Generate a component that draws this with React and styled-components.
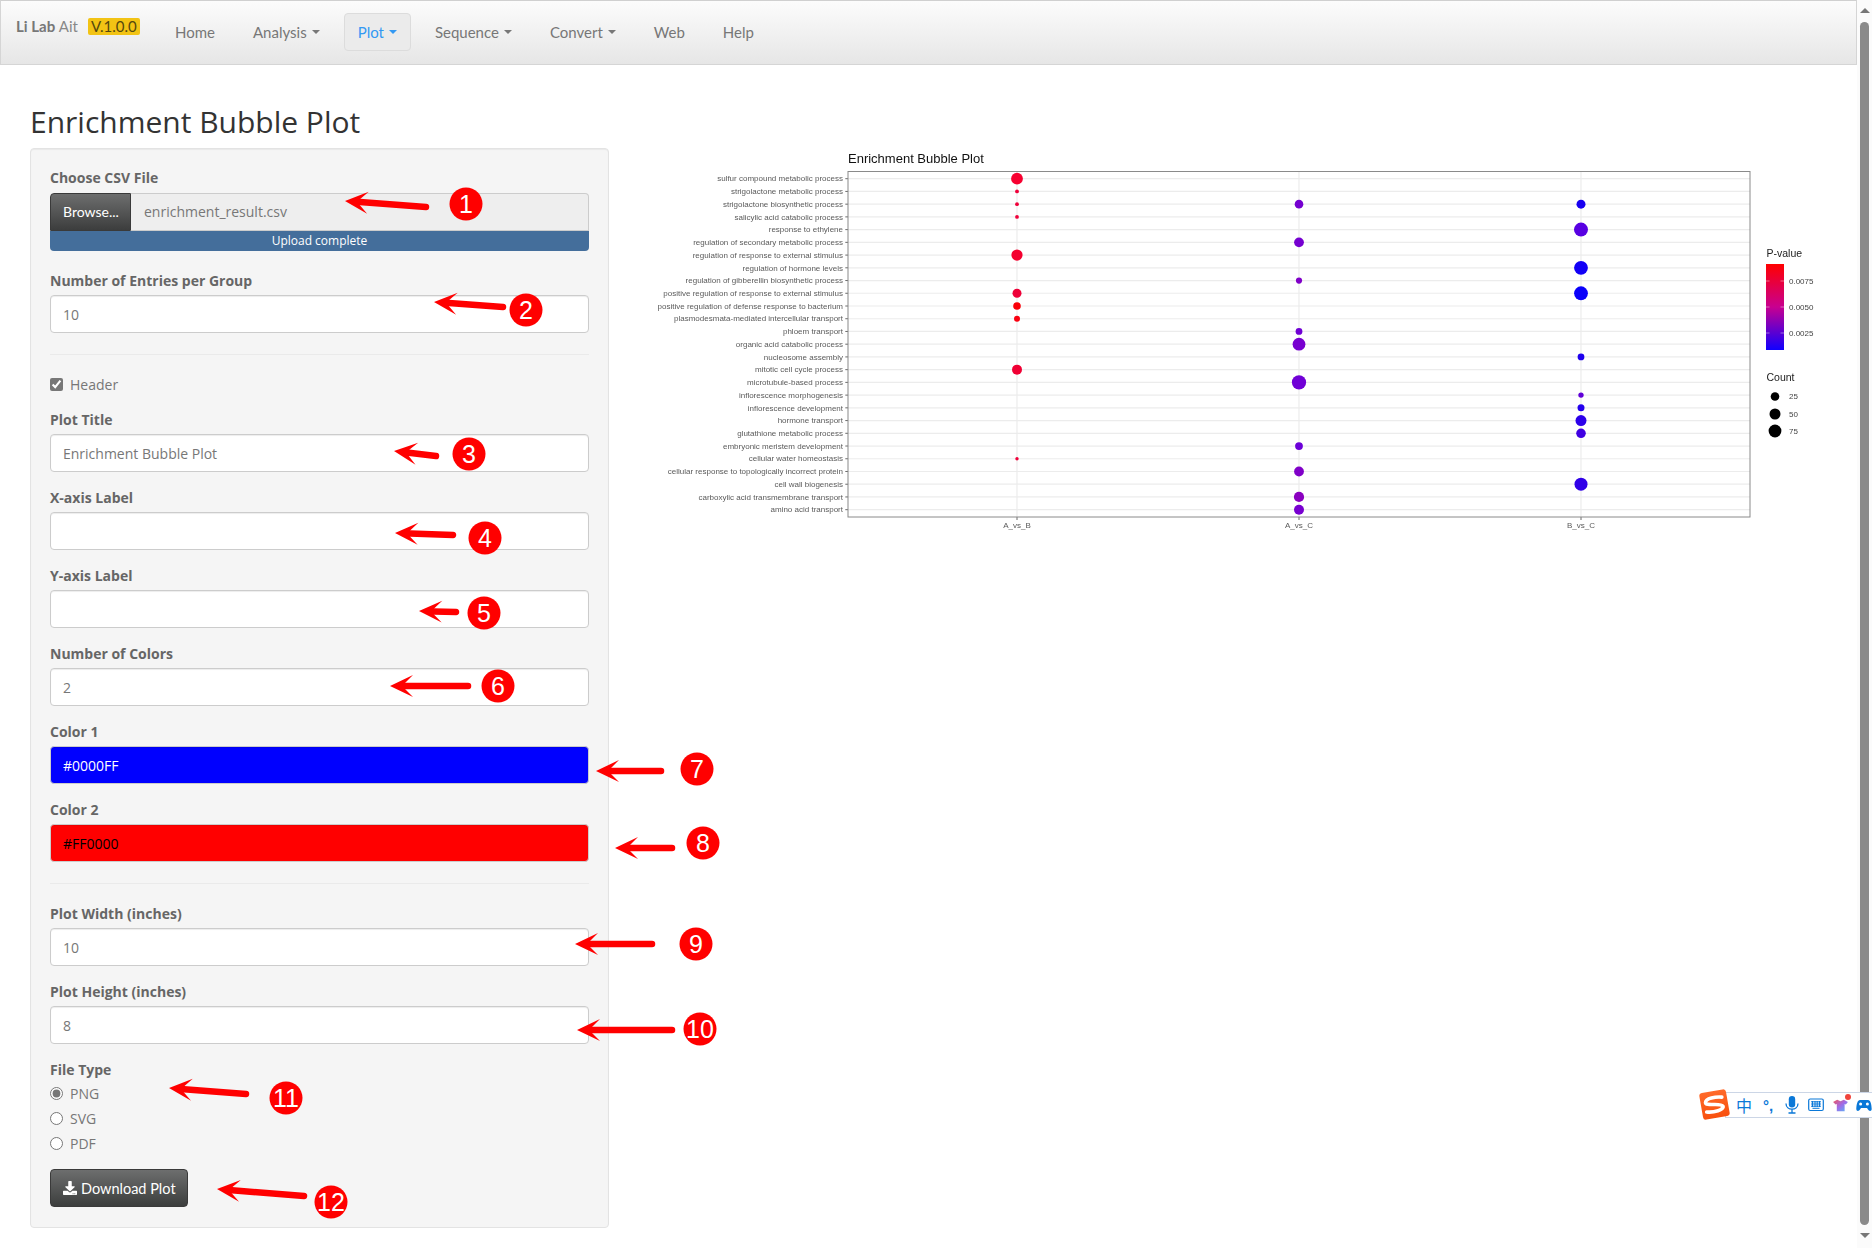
import React from "react";
import styled, { createGlobalStyle } from "styled-components";
import { FaDownload } from "react-icons/fa";

const GlobalStyle = createGlobalStyle`
  html, body {
    margin: 0;
    height: 100%;
    overflow: hidden;
    background: #fff;
    font-family: "Open Sans", "Liberation Sans", sans-serif;
    font-size: 14px;
    color: #666;
  }
  * {
    box-sizing: border-box;
  }
`;

const NAV_ITEMS = [
  { name: "Home" },
  { name: "Analysis", caret: true },
  { name: "Plot", caret: true, active: true },
  { name: "Sequence", caret: true },
  { name: "Convert", caret: true },
  { name: "Web" },
  { name: "Help" },
];

const TERMS = [
  "sulfur compound metabolic process",
  "strigolactone metabolic process",
  "strigolactone biosynthetic process",
  "salicylic acid catabolic process",
  "response to ethylene",
  "regulation of secondary metabolic process",
  "regulation of response to external stimulus",
  "regulation of hormone levels",
  "regulation of gibberellin biosynthetic process",
  "positive regulation of response to external stimulus",
  "positive regulation of defense response to bacterium",
  "plasmodesmata-mediated intercellular transport",
  "phloem transport",
  "organic acid catabolic process",
  "nucleosome assembly",
  "mitotic cell cycle process",
  "microtubule-based process",
  "inflorescence morphogenesis",
  "inflorescence development",
  "hormone transport",
  "glutathione metabolic process",
  "embryonic meristem development",
  "cellular water homeostasis",
  "cellular response to topologically incorrect protein",
  "cell wall biogenesis",
  "carboxylic acid transmembrane transport",
  "amino acid transport",
];

const COLS = [1017, 1299, 1581];
const COL_NAMES = ["A_vs_B", "A_vs_C", "B_vs_C"];
const rowY = (i) => 178.7 + i * 12.73;

// [column, row, radius, colour]
const BUBBLES = [
  [0, 0, 5.9, "#f70030"],
  [0, 1, 1.9, "#f0003a"],
  [0, 2, 1.9, "#f0003a"],
  [0, 3, 1.9, "#f0003a"],
  [0, 6, 5.6, "#f4002f"],
  [0, 9, 4.5, "#ee0038"],
  [0, 10, 3.8, "#fa0008"],
  [0, 11, 3, "#fa0010"],
  [0, 15, 5, "#f00034"],
  [0, 22, 1.7, "#f0003a"],
  [1, 2, 4.3, "#7500d0"],
  [1, 5, 4.9, "#7500d0"],
  [1, 8, 3.1, "#8000c8"],
  [1, 12, 3.4, "#7000d4"],
  [1, 13, 6.4, "#7800d0"],
  [1, 16, 7.1, "#7000d6"],
  [1, 21, 3.9, "#6c00d8"],
  [1, 23, 4.9, "#8000c8"],
  [1, 25, 5.1, "#8a00c0"],
  [1, 26, 5, "#7800d0"],
  [2, 2, 4.5, "#1800f0"],
  [2, 4, 7, "#5800e2"],
  [2, 7, 6.9, "#1200f6"],
  [2, 9, 6.9, "#0a00fa"],
  [2, 14, 3.4, "#1e00ee"],
  [2, 17, 2.7, "#6000d8"],
  [2, 18, 3.5, "#2400ee"],
  [2, 19, 5.5, "#2c00ea"],
  [2, 20, 4.8, "#4000e2"],
  [2, 24, 6.5, "#3000e8"],
];

const P_TICKS = [
  ["0.0075", 281],
  ["0.0050", 307],
  ["0.0025", 333],
];

const COUNT_KEYS = [
  ["25", 396.5, 4.3],
  ["50", 414, 5.5],
  ["75", 431, 6.4],
];

// number, arrow tip, arrow tail, circle centre
const CALLOUTS = [
  [1, [345, 201], [426, 207], [466, 204]],
  [2, [434, 302], [503, 307], [526, 310]],
  [3, [394, 451], [436, 456], [469, 454]],
  [4, [395, 533], [453, 535], [485, 538]],
  [5, [419, 611], [456, 612], [484, 613]],
  [6, [390, 686], [468, 686], [498, 686]],
  [7, [596, 771], [661, 771], [697, 769]],
  [8, [615, 848], [672, 848], [703, 843]],
  [9, [575, 944], [652, 944], [696, 944]],
  [10, [577, 1030], [672, 1030], [700, 1029]],
  [11, [169, 1088], [246, 1094], [286, 1098]],
  [12, [217, 1189], [304, 1196], [331, 1202]],
];

const Arrow = ({ tip, tail }) => {
  const dx = tail[0] - tip[0];
  const dy = tail[1] - tip[1];
  const len = Math.sqrt(dx * dx + dy * dy);
  const deg = (Math.atan2(dy, dx) * 180) / Math.PI;
  return (
    <g transform={`translate(${tip[0]} ${tip[1]}) rotate(${deg})`} fill="#ff0000">
      <polygon points="0,0 23,-11 15,-3 15,3 23,11" />
      <line x1="15" y1="0" x2={len} y2="0" stroke="#ff0000" strokeWidth="6.5" strokeLinecap="round" />
    </g>
  );
};

const Callouts = () => (
  <Overlay viewBox="0 0 1872 1248">
    {CALLOUTS.map(([n, tip, tail, c]) => (
      <g key={n}>
        <Arrow tip={tip} tail={tail} />
        <circle cx={c[0]} cy={c[1]} r="16.5" fill="#ff0000" />
        <CalloutNumber x={c[0]} y={c[1] + 9} textAnchor="middle">
          {n}
        </CalloutNumber>
      </g>
    ))}
  </Overlay>
);

const BubbleChart = () => (
  <ChartSvg viewBox="640 150 1210 400">
    <text x="848" y="162.5" fontSize="13" fill="#111">
      Enrichment Bubble Plot
    </text>
    {TERMS.map((t, i) => (
      <g key={t}>
        <line x1="848" x2="1750" y1={rowY(i)} y2={rowY(i)} stroke="#ececec" strokeWidth="1.2" />
        <line x1="845.3" x2="848" y1={rowY(i)} y2={rowY(i)} stroke="#444" strokeWidth="0.8" />
        <text x="843" y={rowY(i) + 2.7} fontSize="8" fill="#5a5a5a" textAnchor="end">
          {t}
        </text>
      </g>
    ))}
    {COLS.map((x, i) => (
      <g key={x}>
        <line x1={x} x2={x} y1="171.5" y2="517" stroke="#ececec" strokeWidth="1.2" />
        <line x1={x} x2={x} y1="517" y2="520" stroke="#444" strokeWidth="0.8" />
        <text x={x} y="528" fontSize="8" fill="#5a5a5a" textAnchor="middle">
          {COL_NAMES[i]}
        </text>
      </g>
    ))}
    {BUBBLES.map(([c, r, size, color]) => (
      <circle key={`${c}-${r}`} cx={COLS[c]} cy={rowY(r)} r={size} fill={color} />
    ))}
    <rect x="848" y="171.5" width="902" height="345.5" fill="none" stroke="#8a8a8a" strokeWidth="1" />

    <text x="1766.5" y="257" fontSize="10.5" fill="#222">
      P-value
    </text>
    <defs>
      <linearGradient id="pvalue" x1="0" y1="0" x2="0" y2="1">
        <stop offset="0" stopColor="#ff0000" />
        <stop offset="0.5" stopColor="#c80090" />
        <stop offset="1" stopColor="#1000ff" />
      </linearGradient>
    </defs>
    <rect x="1766" y="264" width="18" height="86" fill="url(#pvalue)" />
    {P_TICKS.map(([label, y]) => (
      <g key={label}>
        <line x1="1766" x2="1769.5" y1={y} y2={y} stroke="#fff" strokeOpacity="0.6" strokeWidth="0.7" />
        <line x1="1780.5" x2="1784" y1={y} y2={y} stroke="#fff" strokeOpacity="0.6" strokeWidth="0.7" />
        <text x="1789" y={y + 2.7} fontSize="8" fill="#444">
          {label}
        </text>
      </g>
    ))}
    <text x="1766.5" y="381" fontSize="10.5" fill="#222">
      Count
    </text>
    {COUNT_KEYS.map(([label, y, r]) => (
      <g key={label}>
        <circle cx="1775" cy={y} r={r} fill="#000" />
        <text x="1789" y={y + 2.7} fontSize="8" fill="#444">
          {label}
        </text>
      </g>
    ))}
  </ChartSvg>
);

const SogouBar = () => (
  <ImeBar>
    <ImeLogo>
      <svg width="29" height="29" viewBox="0 0 29 29">
        <defs>
          <linearGradient id="sogou" x1="0" y1="0" x2="0" y2="1">
            <stop offset="0" stopColor="#ff6a2a" />
            <stop offset="1" stopColor="#f8500e" />
          </linearGradient>
        </defs>
        <rect x="1" y="1" width="27" height="27" rx="3" fill="url(#sogou)" />
        <path
          d="M23 8.5 C17 7 7 6.5 6 11 C5.2 15 21 13.5 22.5 17.5 C23.5 21.5 12 22.5 5.5 20.5"
          fill="none"
          stroke="#fff"
          strokeWidth="3.6"
          strokeLinecap="round"
        />
      </svg>
    </ImeLogo>
    <ImeSlot>
      <ImeGlyph>中</ImeGlyph>
    </ImeSlot>
    <ImeSlot>
      <ImePunct>°,</ImePunct>
    </ImeSlot>
    <ImeSlot>
      <svg width="14" height="18" viewBox="0 0 14 18">
        <rect x="3.8" y="0" width="6.4" height="11.5" rx="3.2" fill="#0a78d8" />
        <path d="M1 7.5 C1 15 13 15 13 7.5 M7 13 V17 M3.5 17 H10.5" fill="none" stroke="#0a78d8" strokeWidth="1.3" />
      </svg>
    </ImeSlot>
    <ImeSlot>
      <svg width="16" height="14" viewBox="0 0 16 14">
        <rect x="0.7" y="1" width="14.6" height="11.5" rx="1.5" fill="none" stroke="#0a78d8" strokeWidth="1.2" />
        <path
          d="M3 3.8 H13 M3 6 H13 M3 8.2 H13 M4.5 10.3 H11.5 M4.5 3 V9 M7 3 V9 M9.2 3 V9 M11.5 3 V9"
          fill="none"
          stroke="#0a78d8"
          strokeWidth="1"
        />
      </svg>
    </ImeSlot>
    <ImeSlot>
      <ImeShirt>
        <svg width="15" height="14" viewBox="0 0 18 17">
          <defs>
            <linearGradient id="shirt" x1="0" y1="0" x2="1" y2="1">
              <stop offset="0" stopColor="#f0555a" />
              <stop offset="0.5" stopColor="#a06ae8" />
              <stop offset="1" stopColor="#55b8f8" />
            </linearGradient>
          </defs>
          <path d="M5 2 L9 4 L13 2 L18 5 L15.5 8 L14 7.2 V16 H4.5 V7.2 L3 8 L0 5 Z" fill="url(#shirt)" />
        </svg>
        <ImeDot />
      </ImeShirt>
    </ImeSlot>
    <ImeSlot>
      <svg width="16" height="13" viewBox="0 0 16 13">
        <path
          d="M4 1 H12 C14.5 1 15.5 5 15.7 10 C15.7 12.5 13 12.5 12 10.5 L11 9 H5 L4 10.5 C3 12.5 0.3 12.5 0.3 10 C0.5 5 1.5 1 4 1 Z"
          fill="#0a78d8"
        />
        <circle cx="4.6" cy="5" r="1.5" fill="#fff" />
        <circle cx="11.4" cy="5" r="1.5" fill="#fff" />
      </svg>
    </ImeSlot>
  </ImeBar>
);

const App = () => (
  <Frame>
    <GlobalStyle />
    <Main>
      <Navbar>
        <Brand>
          <BrandName>
            Li Lab <BrandThin>Ait</BrandThin>
          </BrandName>
          <Version>V.1.0.0</Version>
        </Brand>
        <NavList>
          {NAV_ITEMS.map((item) => (
            <NavItem key={item.name} $active={item.active}>
              {item.name}
              {item.caret && <Caret />}
            </NavItem>
          ))}
        </NavList>
      </Navbar>
      <Content>
        <PageTitle>Enrichment Bubble Plot</PageTitle>
        <Columns>
          <Sidebar>
            <FileField>
              <FileLabel>Choose CSV File</FileLabel>
              <FileRow>
                <BrowseButton>Browse...</BrowseButton>
                <FileName>enrichment_result.csv</FileName>
              </FileRow>
              <Progress>Upload complete</Progress>
            </FileField>
            <Field>
              <Label>Number of Entries per Group</Label>
              <Input defaultValue="10" />
            </Field>
            <Rule />
            <CheckRow>
              <input type="checkbox" defaultChecked />
              Header
            </CheckRow>
            <Field>
              <Label>Plot Title</Label>
              <Input defaultValue="Enrichment Bubble Plot" />
            </Field>
            <Field>
              <Label>X-axis Label</Label>
              <Input />
            </Field>
            <Field>
              <Label>Y-axis Label</Label>
              <Input />
            </Field>
            <Field>
              <Label>Number of Colors</Label>
              <Input defaultValue="2" />
            </Field>
            <Field>
              <Label>Color 1</Label>
              <Input defaultValue="#0000FF" $bg="#0000ff" $fg="#fff" />
            </Field>
            <Field>
              <Label>Color 2</Label>
              <Input defaultValue="#FF0000" $bg="#ff0000" $fg="#000" />
            </Field>
            <WideRule />
            <Field>
              <Label>Plot Width (inches)</Label>
              <Input defaultValue="10" />
            </Field>
            <Field>
              <Label>Plot Height (inches)</Label>
              <Input defaultValue="8" />
            </Field>
            <Label>File Type</Label>
            <RadioGroup>
              <RadioRow>
                <input type="radio" name="filetype" defaultChecked />
                PNG
              </RadioRow>
              <RadioRow>
                <input type="radio" name="filetype" />
                SVG
              </RadioRow>
              <RadioRow>
                <input type="radio" name="filetype" />
                PDF
              </RadioRow>
            </RadioGroup>
            <DownloadButton>
              <FaDownload size={14} />
              Download Plot
            </DownloadButton>
          </Sidebar>
          <BubbleChart />
        </Columns>
      </Content>
    </Main>
    <Scrollbar>
      <ScrollUp />
      <ScrollThumb />
      <ScrollDown />
    </Scrollbar>
    <Callouts />
    <SogouBar />
  </Frame>
);

const Frame = styled.div`
  position: relative;
  display: flex;
  width: 1872px;
  height: 1248px;
  overflow: hidden;
`;

const Main = styled.div`
  flex: 1;
  min-width: 0;
`;

const Navbar = styled.nav`
  display: flex;
  align-items: center;
  height: 65px;
  padding-bottom: 2px;
  border: 1px solid #d5d5d5;
  border-top-color: #d0d0d0;
  background: linear-gradient(#fcfcfc, #e6e6e6);
`;

const Brand = styled.div`
  display: flex;
  align-items: center;
  gap: 10px;
  width: 160px;
  padding: 0 0 11px 15px;
`;

const BrandName = styled.span`
  font-family: Lato, "Open Sans", sans-serif;
  font-size: 15px;
  font-weight: 700;
  color: #777;
  white-space: nowrap;
`;

const BrandThin = styled.span`
  font-weight: 400;
  color: #888;
`;

const Version = styled.span`
  padding: 0 3px;
  height: 17px;
  line-height: 17px;
  border-radius: 2px;
  background: #f2c314;
  font-family: Lato, sans-serif;
  font-size: 15px;
  color: #55480e;
  white-space: nowrap;
`;

const NavList = styled.div`
  display: flex;
  align-items: center;
  gap: 10px;
`;

const NavItem = styled.a`
  display: flex;
  align-items: center;
  height: 38px;
  padding: 0 13px;
  border-radius: 4px;
  border: 1px solid ${(p) => (p.$active ? "#dcdcdc" : "transparent")};
  background: ${(p) => (p.$active ? "#ebebeb" : "transparent")};
  font-family: Lato, "Open Sans", sans-serif;
  font-size: 15px;
  color: ${(p) => (p.$active ? "#3399f3" : "#777")};
  white-space: nowrap;
`;

const Caret = styled.span`
  width: 0;
  height: 0;
  margin-left: 5px;
  border-top: 4px solid currentColor;
  border-left: 4px solid transparent;
  border-right: 4px solid transparent;
`;

const Content = styled.main`
  padding: 40px 0 0 30px;
`;

const PageTitle = styled.h2`
  margin: 0 0 10px;
  font-size: 30px;
  line-height: 33px;
  font-weight: 400;
  color: #333;
`;

const Columns = styled.div`
  display: flex;
  align-items: flex-start;
`;

const Sidebar = styled.form`
  flex: none;
  width: 579px;
  height: 1080px;
  padding: 19px;
  background: #f5f5f5;
  border: 1px solid #e3e3e3;
  border-radius: 4px;
  box-shadow: inset 0 1px 1px rgba(0, 0, 0, 0.05);
`;

const Field = styled.div`
  margin-bottom: 16px;
`;

const FileField = styled.div`
  margin-bottom: 20px;
`;

const Label = styled.label`
  display: block;
  height: 20px;
  margin-bottom: 4px;
  line-height: 20px;
  font-size: 14px;
  font-weight: 700;
  color: #666;
`;

const FileLabel = styled(Label)`
  margin-bottom: 5px;
`;

const FileRow = styled.div`
  display: flex;
  height: 38px;
`;

const BrowseButton = styled.span`
  display: flex;
  align-items: center;
  flex: none;
  width: 81px;
  padding: 0 0 2px 12px;
  border: 1px solid #3a3a3a;
  border-radius: 4px 0 0 0;
  background: linear-gradient(#6d6e6e, #3c3d3d);
  font-family: Lato, sans-serif;
  font-size: 14px;
  color: #fff;
`;

const FileName = styled.div`
  flex: 1;
  padding-left: 13px;
  line-height: 35px;
  background: #eee;
  border: 1px solid #ccc;
  border-left: 0;
  border-radius: 0 4px 0 0;
  font-size: 14px;
  color: #777;
`;

const Progress = styled.div`
  height: 20px;
  line-height: 20px;
  text-align: center;
  background: #446e9b;
  border-radius: 0 0 4px 4px;
  font-size: 12px;
  color: #fff;
`;

const Input = styled.input`
  display: block;
  width: 100%;
  height: 38px;
  padding: 0 12px;
  background: ${(p) => p.$bg || "#fff"};
  border: 1px solid #ccc;
  border-radius: 4px;
  box-shadow: inset 0 1px 1px rgba(0, 0, 0, 0.075);
  font-family: "Open Sans", sans-serif;
  font-size: 14px;
  color: ${(p) => p.$fg || "#777"};
  outline: none;
`;

const Rule = styled.hr`
  height: 1px;
  margin: 21px 0 19px;
  border: 0;
  background: #eaeaea;
`;

const WideRule = styled(Rule)`
  margin: 21px 0 20px;
`;

const CheckRow = styled.label`
  display: flex;
  align-items: center;
  gap: 7px;
  height: 20px;
  margin-bottom: 16px;
  font-size: 14px;
  color: #777;

  input {
    width: 13px;
    height: 13px;
    margin: 0;
    accent-color: #777;
  }
`;

const RadioGroup = styled.div`
  margin: -3px 0 13px;
`;

const RadioRow = styled(CheckRow)`
  height: 25px;
  margin: 0;
`;

const DownloadButton = styled.button`
  display: flex;
  align-items: center;
  gap: 4px;
  height: 38px;
  width: 138px;
  padding: 0 0 0 12px;
  border: 1px solid #3a3a3a;
  border-radius: 4px;
  background: linear-gradient(#6d6e6e, #3c3e3d);
  font-family: Lato, sans-serif;
  font-size: 14.5px;
  color: #fff;
`;

const ChartSvg = styled.svg`
  flex: none;
  width: 1210px;
  height: 400px;
  margin: 2px 0 0 31px;
  font-family: "Liberation Sans", Arial, sans-serif;
  filter: blur(0.3px);
`;

const Scrollbar = styled.aside`
  flex: none;
  display: flex;
  flex-direction: column;
  align-items: center;
  width: 15px;
  padding: 8px 3px 7px 3px;
  background: #fbfbfb;
`;

const ScrollUp = styled.span`
  width: 0;
  height: 0;
  margin-bottom: 9px;
  border-bottom: 5px solid #777;
  border-left: 5px solid transparent;
  border-right: 5px solid transparent;
`;

const ScrollThumb = styled.span`
  flex: none;
  width: 9px;
  height: 1203px;
  border-radius: 5px;
  background: #8a8a8a;
`;

const ScrollDown = styled.span`
  width: 0;
  height: 0;
  margin-top: 8px;
  border-top: 5px solid #777;
  border-left: 5px solid transparent;
  border-right: 5px solid transparent;
`;

const Overlay = styled.svg`
  position: absolute;
  top: 0;
  left: 0;
  width: 1872px;
  height: 1248px;
  pointer-events: none;
`;

const CalloutNumber = styled.text`
  font-family: "Liberation Sans", Arial, sans-serif;
  font-size: 25px;
  fill: #fff;
`;

const ImeBar = styled.div`
  position: absolute;
  top: 1092px;
  left: 1725px;
  display: flex;
  align-items: center;
  width: 155px;
  height: 26px;
  padding-left: 6px;
  background: #fff;
  border: 1px solid #ccd6e6;
  border-right: 0;
`;

const ImeSlot = styled.span`
  flex: none;
  display: flex;
  align-items: center;
  justify-content: center;
  width: 24px;
`;

const ImeLogo = styled.div`
  position: absolute;
  top: -3px;
  left: -26px;
  display: flex;
  transform: rotate(-10deg);
`;

const ImeGlyph = styled.span`
  font-family: "Noto Sans CJK SC", sans-serif;
  font-size: 16px;
  line-height: 1;
  color: #0a78d8;
`;

const ImePunct = styled.span`
  font-family: "Liberation Sans", sans-serif;
  font-size: 15px;
  font-weight: 700;
  line-height: 1;
  color: #0a78d8;
`;

const ImeShirt = styled.span`
  position: relative;
  display: flex;
`;

const ImeDot = styled.span`
  position: absolute;
  top: -4px;
  right: -3px;
  width: 6px;
  height: 6px;
  border-radius: 50%;
  background: #f0443c;
`;

export default App;
